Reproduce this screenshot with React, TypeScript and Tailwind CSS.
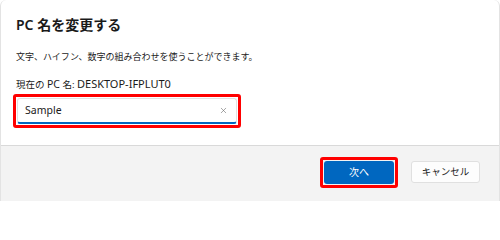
import { X } from 'lucide-react'

const font = { fontFamily: '"Noto Sans", "Noto Sans CJK JP", sans-serif' }

export default function App() {
  return (
    <div style={font} className="w-[500px] h-[201px] bg-white border-l border-r border-[#e3e3e3] rounded-t-[6px] flex flex-col overflow-hidden text-[#1a1a1a]">
      <div className="h-[146px] px-[15px] pt-[15px] border-b border-[#d9d9d9]">
        <h1 className="text-[14px] leading-[20px] font-semibold">PC 名を変更する</h1>
        <p className="mt-[15px] text-[9px] leading-[14px]">文字、ハイフン、数字の組み合わせを使うことができます。</p>
        <p className="mt-[13px] text-[9.5px] leading-[14px]">
          現在の <span className="text-[10.5px]">PC</span> 名: <span className="text-[11px]">DESKTOP-IFPLUT0</span>
        </p>
        <div className="mt-[2px] -ml-[3px] w-[228px] h-[34px] border-[3px] border-[#ff0000] rounded-[3px] p-px">
          <div className="h-full bg-white border border-[#e1e1e1] border-b-2 border-b-[#0067c0] rounded-[3px] flex items-center pl-[7px] pr-[8px]">
            <span className="flex-1 text-[10.5px] text-[#1a1a1a]">Sample</span>
            <X size={9} strokeWidth={1.5} className="text-[#666]" />
          </div>
        </div>
      </div>
      <div className="flex-1 bg-[#f3f3f3] flex items-center justify-end pr-[19px] gap-[13px] pb-[3px]">
        <div className="w-[78px] h-[31px] border-[3px] border-[#ff0000] rounded-[3px] p-px">
          <button className="w-full h-full bg-[#0067c0] rounded-[3px] text-white text-[10px] flex items-center justify-center">次へ</button>
        </div>
        <button className="w-[69px] h-[22px] bg-[#fdfdfd] border border-[#e0e0e0] rounded-[3px] text-[9.5px] flex items-center justify-center">キャンセル</button>
      </div>
    </div>
  )
}
